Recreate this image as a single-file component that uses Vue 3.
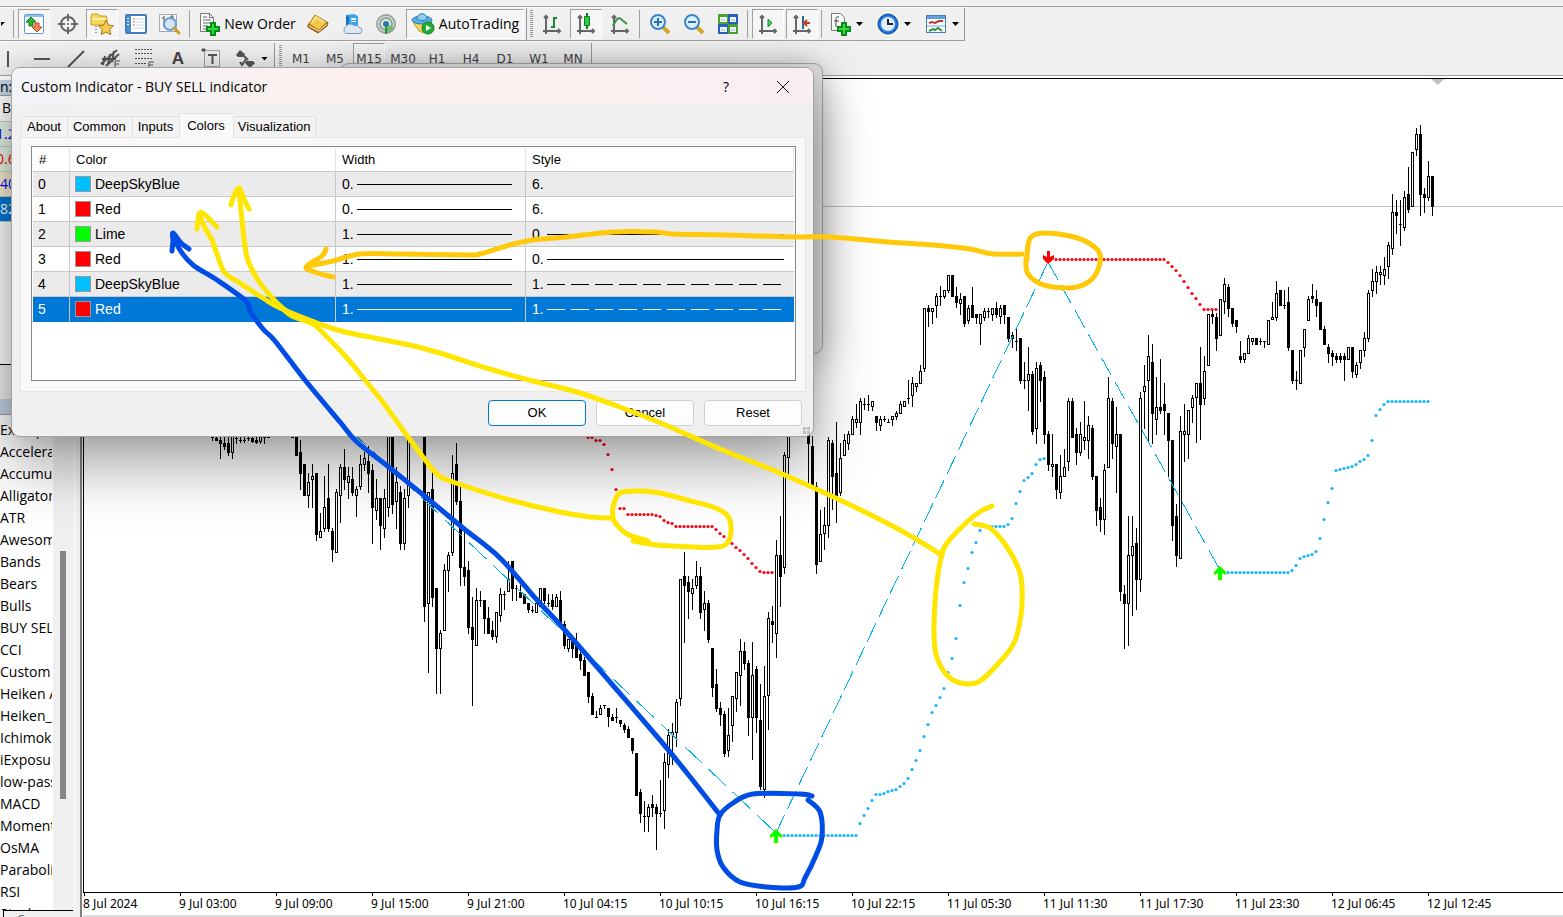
<script setup>
import { ref } from 'vue'

const F = 1
const H = 0

// Each run starts at x and advances 4px per candle: [high, bodyTop, bodyBottom, low, filled]
const runs = [
  { x: 212, bars: [
    [436,437,438,441,F],[436,438,441,441,F],[436,440,444,459,F],[436,443,447,450,F],[436,443,453,456,F],[434,434,453,459,H],
    [436,438,438,444,F],[436,440,440,443,F],[436,440,440,443,F],[436,438,438,441,F],[436,438,442,443,F],[436,440,443,444,F],
    [436,434,442,444,H],[436,437,438,444,F],[436,437,437,438,F]] },
  { x: 292, bars: [
    [436,437,437,438,F],[436,436,456,456,F],[440,452,474,490,F],[464,464,496,496,F],[473,482,496,508,H],[464,476,480,508,H],
    [473,473,535,541,F],[513,531,538,538,H],[476,507,529,532,H],[464,498,529,532,F],[528,531,550,562,F],[489,492,553,553,H],
    [464,467,496,523,H],[449,467,480,490,F],[467,476,483,499,H],[467,479,493,496,F],[486,489,496,517,H],[455,464,487,490,H],
    [452,458,465,471,H],[446,461,474,493,F],[464,470,508,544,F],[479,498,511,520,H],[498,498,526,550,F],[489,498,529,538,H],
    [436,434,508,517,H],[436,434,505,514,F],[467,482,502,529,H],[486,492,544,550,F],[489,498,544,550,H],[436,434,496,508,H]] },
  { x: 424, bars: [
    [436,434,607,622,F],[492,492,604,673,H],[472,489,598,607,F],[588,588,649,694,F],[630,633,649,694,H],[564,570,631,631,H],
    [552,555,571,592,H],[455,473,553,556,H],[443,464,502,505,F],[482,501,568,586,F],[530,567,577,586,F],[561,570,628,634,F],
    [597,627,640,706,F],[588,600,646,646,H],[591,600,600,607,F],[600,600,619,634,F],[607,618,634,634,F],[621,630,637,640,F],
    [612,612,637,643,H],[588,594,616,622,H],[591,594,594,610,F],[561,579,592,592,H],[561,561,589,601,F],[585,588,588,601,F],
    [585,592,598,598,F],[594,594,604,604,F],[603,603,610,613,F],[606,610,610,613,F],[603,603,613,613,H],[588,588,607,607,H],
    [588,588,601,604,F],[594,603,603,607,F],[594,600,607,610,F],[594,597,607,607,H],[591,600,628,628,F],[621,624,646,649,F],
    [639,639,649,652,H],[636,640,649,658,F],[633,643,658,658,F],[652,654,661,670,F],[657,660,676,676,F],[672,672,697,703,F],
    [693,696,715,715,F],[711,717,717,717,F],[705,708,715,715,H],[705,705,705,709,F],[708,708,717,727,F],[714,717,721,721,F],
    [708,717,717,723,F],[720,720,724,727,F],[723,725,730,733,F],[726,729,738,738,F],[738,738,751,754,F],[753,753,796,796,F],
    [789,792,814,823,F],[801,816,816,832,F],[804,807,817,832,H],[795,804,808,817,F],[804,807,814,850,F],[780,813,813,817,F],
    [753,762,811,829,H],[729,735,765,778,H],[723,732,735,765,H],[699,702,733,747,H],[579,579,699,706,H],[552,576,586,643,F],
    [576,582,592,619,F],[579,588,594,610,H],[561,576,586,589,H],[567,576,613,619,F],[591,603,610,631,H],[600,603,640,643,F],
    [648,648,688,697,F],[669,684,709,712,F],[702,708,715,726,F],[711,714,754,757,F],[708,735,751,757,H],[696,696,726,742,H],
    [672,672,699,712,H],[639,651,676,706,H],[642,651,664,670,F],[660,663,718,736,F],[642,675,718,760,H],[666,669,718,733,F],
    [684,720,787,790,F],[666,696,790,798,H],[612,618,696,730,H],[606,621,625,643,F],[540,555,634,658,H],[516,555,577,607,F],
    [452,455,568,574,H],[436,434,458,474,H]] },
  { x: 808, bars: [
    [436,434,444,483,F],[436,446,486,486,F],[482,486,565,574,F],[510,534,562,562,H],[507,525,534,550,H],[437,440,526,538,H],
    [440,443,477,510,F],[422,473,496,523,F],[443,458,493,496,H],[434,440,456,456,H],[431,434,444,450,H],[416,419,435,435,H],
    [404,419,423,428,H],[398,401,423,435,H],[398,404,404,410,F],[395,404,404,411,F],[401,401,407,411,H],[416,416,423,431,F],
    [416,419,426,431,H],[416,419,419,422,F],[419,422,422,422,F],[416,416,420,426,H],[411,413,417,420,H],[401,404,414,414,H],
    [401,401,407,407,H],[380,398,398,404,F],[377,383,396,407,H],[383,383,387,392,H],[365,371,384,384,H],[308,308,369,372,H],
    [305,308,312,327,F],[308,308,312,324,H],[293,296,306,318,H],[286,296,296,306,F],[290,290,297,299,H],[275,275,291,293,H],
    [275,275,297,297,F],[287,296,303,308,F],[293,299,304,315,H],[296,296,324,327,F],[305,308,321,324,H],[287,305,318,318,F],
    [314,314,318,324,F],[314,314,324,345,H],[308,311,318,321,H],[308,311,311,318,F],[308,308,315,321,H],[302,308,315,318,F],
    [305,308,317,324,H],[305,305,315,324,F],[317,317,339,342,F],[332,335,339,348,F],[328,341,341,351,F],[338,338,381,384,F],
    [362,380,380,389,F],[347,374,381,411,H],[371,374,432,435,F],[362,368,429,444,H],[362,365,381,402,F],[371,377,435,444,F],
    [431,434,465,471,F],[434,464,467,477,H],[464,464,490,499,F],[455,476,493,499,H],[449,467,477,477,H],[398,401,462,471,H],
    [398,401,438,438,F],[428,434,453,465,F],[422,434,453,456,H],[401,437,441,450,H],[416,425,441,459,H],[425,428,477,480,F],
    [476,476,511,526,F],[498,507,520,532,F],[464,470,520,535,H],[377,398,468,468,H],[398,401,444,459,F],[407,434,447,493,H],
    [434,434,592,601,F],[585,594,604,649,F],[516,555,604,646,H],[516,546,556,616,H],[528,543,580,610,F],[392,398,580,592,H],
    [365,386,392,429,H],[335,356,381,441,H],[344,362,414,444,F],[377,407,420,435,H],[359,407,411,414,F],[383,404,411,435,F],
    [413,413,441,477,F],[440,440,526,541,F],[504,516,556,567,F],[416,431,559,559,H],[404,431,435,462,H],[410,410,435,459,H],
    [395,398,408,423,H],[383,383,398,443,H],[347,383,405,440,F],[356,371,399,405,H],[314,314,366,366,H],[310,314,317,324,F],
    [313,317,339,351,F],[299,299,336,336,H],[278,284,302,314,H],[284,287,309,317,F],[308,308,324,327,F],[320,320,327,333,F],
    [341,356,360,363,F],[353,353,360,363,H],[335,338,354,354,H],[338,338,342,345,H],[338,338,345,345,F],[338,341,341,345,F],
    [341,341,341,348,F],[320,320,345,345,H],[302,317,320,320,H],[281,293,318,321,H],[290,290,306,306,F],[290,305,305,309,F],
    [287,302,348,351,F],[350,350,381,384,F],[371,380,380,390,F],[350,350,384,384,H],[329,329,348,357,H],[296,299,321,321,H],
    [284,296,299,303,F],[290,299,306,317,F],[302,302,330,330,F],[326,329,345,345,F],[344,347,354,363,F],[350,353,357,366,F],
    [353,356,360,363,F],[353,356,360,363,F],[353,356,360,381,F],[347,347,360,360,H],[347,347,372,378,F],[362,365,375,378,H],
    [350,350,363,369,H],[332,338,351,357,H],[290,293,339,342,H],[269,281,291,297,H],[266,272,282,294,H],[266,272,275,285,H],
    [257,269,276,285,H],[242,245,267,279,H],[194,212,249,255,H],[200,212,216,234,F],[200,224,224,246,F],[191,197,228,231,H],
    [167,194,210,213,F],[152,152,207,207,H],[128,134,150,156,H],[125,134,195,216,F],[188,194,198,213,F],[161,176,198,201,H],
    [176,176,207,216,F]] },
]
const candles = runs.flatMap(r => r.bars.map(([h, t, b, l, f], i) => ({ x: r.x + i * 4, h, t, b: Math.max(b, t + 1), l, f })))
const wickPath = candles.map(c => `M${c.x} ${c.h}h1V${c.l}h-1z`).join('')
const solidPath = candles.filter(c => c.f).map(c => `M${c.x - 1} ${c.t}h3V${c.b}h-3z`).join('')
const hollow = candles.filter(c => !c.f)
const hollowPath = hollow.map(c => `M${c.x - 1} ${c.t}h3V${c.b}h-3z`).join('')
const hollowCore = hollow.filter(c => c.b - c.t > 2).map(c => `M${c.x} ${c.t + 1}h1V${c.b - 1}h-1z`).join('')

const rep = (n, v) => Array(n).fill(v)
const series = (x, ys) => ys.map((y, i) => ({ x: x + i * 4, y }))
const redDots = [
  ...series(588, [437, 437, 440, 440, 444, 454, 469, 489, 508, 508, ...rep(7, 514), 515, 516, 520, 522, 523, ...rep(10, 526),
    529, 533, 536, 540, 543, 547, 550, 554, 558, 563, 567, 571, 572, 572, 572]),
  ...series(1056, [...rep(28, 259), 262, 266, 270, 275, 281, 287, 293, 298, 304, ...rep(4, 309)]),
]
const blueDots = [
  ...series(784, [...rep(19, 835), 823, 815, 808, 800, 794, 794, 793, 791, 790, 789, 786, 783, 778, 769, 760, 750, 736, 724, 712, 705,
    697, 688, 672, 658, 638, 605, 582, 568, 552, 542, 530, ...rep(6, 526), 524, 518, 503, 491, 480, 477, 473, 464, 459, 458]),
  ...series(1228, [...rep(16, 572), 570, 565, 558, 556, 555, 554, 551, 538, 519, 502, 488, 470, 469, 468, 467, 466, 464, 461, 459, 455, 440,
    415, 409, 404, ...rep(11, 401)]),
]

// Catmull-Rom smoothing for the pen strokes
function smooth(p) {
  let d = `M${p[0][0]} ${p[0][1]}`
  for (let i = 0; i < p.length - 1; i++) {
    const a = p[i - 1] || p[i], b = p[i], c = p[i + 1], e = p[i + 2] || c
    d += `C${b[0] + (c[0] - a[0]) / 6} ${b[1] + (c[1] - a[1]) / 6} ${c[0] - (e[0] - b[0]) / 6} ${c[1] - (e[1] - b[1]) / 6} ${c[0]} ${c[1]}`
  }
  return d
}
const yellow = [
  [[239,188],[242,220],[247,257],[258,280],[277,303],[290,314]],
  [[231,205],[234,196],[239,188],[244,199],[249,209]],
  [[199,214],[205,228],[212,240],[218,257],[225,273],[240,283],[263,298],[280,308],[317,323],[345,332],[400,343],[433,351],[493,370],[533,381],[577,392],[617,406],[663,424],[720,449],[780,473],[840,500],[900,530],[942,555]],
  [[197,229],[199,214],[204,214],[217,227]],
  [[280,306],[292,316],[313,324],[330,340],[347,358],[365,380],[385,405],[403,430],[423,457],[438,475],[453,482],[510,500],[560,512],[590,517],[612,518]],
  [[613,518],[613,507],[620,493],[640,491],[660,493],[687,500],[713,507],[727,515],[731,527],[728,542],[718,547],[693,547],[657,545],[633,541]],
  [[613,518],[616,524],[627,534],[648,541]],
  [[974,524],[990,528],[1007,547],[1019,570],[1022,587],[1021,615],[1014,643],[997,665],[980,681],[967,684],[950,678],[937,658],[934,633],[936,590],[941,558],[947,543],[967,522],[981,511],[992,506]],
].map(smooth)
const orange = [
  [[1022,254],[993,254],[970,249],[933,245],[887,242],[830,237],[793,237],[727,235],[673,234],[655,232],[613,232],[567,237],[533,240],[510,245],[480,254],[467,255],[400,254],[360,254],[333,261],[309,266]],
  [[326,249],[322,256],[306,267],[318,273],[333,277]],
  [[1027,260],[1028,245],[1032,236],[1045,233],[1070,236],[1087,242],[1099,252],[1100,263],[1093,278],[1077,287],[1053,287],[1037,282],[1027,272],[1026,258]],
].map(smooth)
const blue = [
  [[174,236],[180,250],[193,265],[217,280],[246,301],[250,311],[263,329],[275,341],[305,380],[340,422],[357,442],[390,468],[427,498],[463,528],[500,558],[537,600],[563,628],[610,682],[660,740],[687,773],[720,815]],
  [[172,251],[173,241],[173,233],[181,243],[189,249]],
  [[812,796],[800,794],[753,794],[733,803],[720,815],[717,830],[717,850],[723,867],[740,882],[767,887],[798,887],[805,878],[817,853],[822,837],[820,812],[808,800]],
].map(smooth)

const times = ['8 Jul 2024', '9 Jul 03:00', '9 Jul 09:00', '9 Jul 15:00', '9 Jul 21:00', '10 Jul 04:15', '10 Jul 10:15', '10 Jul 16:15',
  '10 Jul 22:15', '11 Jul 05:30', '11 Jul 11:30', '11 Jul 17:30', '11 Jul 23:30', '12 Jul 06:45', '12 Jul 12:45']
const indicators = ['Examples', 'Accelerator', 'Accumulation', 'Alligator', 'ATR', 'Awesome', 'Bands', 'Bears', 'Bulls', 'BUY SELL', 'CCI',
  'Custom', 'Heiken Ashi', 'Heiken_Ashi', 'Ichimoku', 'iExposure', 'low-pass', 'MACD', 'Momentum', 'OsMA', 'Parabolic', 'RSI', 'Stochastic']
const frames = ['M1', 'M5', 'M15', 'M30', 'H1', 'H4', 'D1', 'W1', 'MN']
const frame = ref('M15')
const tabs = ['About', 'Common', 'Inputs', 'Colors', 'Visualization']
const tab = ref('Colors')
const rows = [
  { name: 'DeepSkyBlue', cls: 'sky', width: 0, style: 6, line: '' },
  { name: 'Red', cls: 'red', width: 0, style: 6, line: '' },
  { name: 'Lime', cls: 'lime', width: 1, style: 0, line: 'solid' },
  { name: 'Red', cls: 'red', width: 1, style: 0, line: 'solid' },
  { name: 'DeepSkyBlue', cls: 'sky', width: 1, style: 1, line: 'dash' },
  { name: 'Red', cls: 'red', width: 1, style: 1, line: 'dash' },
]
const selected = ref(5)
</script>

<template>
  <div class="app">
    <div class="menu-strip"></div>
    <div class="toolbar main-bar">
      <button class="tb drop" aria-label="Profiles"><i class="caret"></i></button>
      <i class="sep"></i>
      <button class="tb on" aria-label="Market Watch">
        <svg width="22" height="22"><rect x="1.500" y="1.500" width="19" height="19" rx="1" fill="#fff" stroke="#5b9bd9" /><path d="M2 2h18v2H2z" fill="#8fc0ee" /><path d="M8 4l5 5h-3v4H6V9H3z" fill="#2fb535" stroke="#187a1c" /><path d="M14 19l5-5h-3v-4h-4v4H9z" fill="#f58a60" stroke="#c4441c" /></svg>
      </button>
      <button class="tb" aria-label="Data Window">
        <svg width="22" height="22" fill="none" stroke="#666" stroke-width="2"><circle cx="11" cy="11" r="7" /><path d="M11 1v7M11 14v7M1 11h7M14 11h7" /><path d="M11 10v2M10 11h2" stroke-width="1" /></svg>
      </button>
      <button class="tb on" aria-label="Navigator">
        <svg width="24" height="22"><path d="M1 3l1-2h6l2 2h6l1 2v7H1z" fill="#f5d75c" stroke="#c69a22" /><path d="M2 5h14v2H2z" fill="#fff3b0" /><path d="M6 13v9" stroke="#333" stroke-dasharray="1 2" /><path d="M16 7l2.500 5 5 .8-3.700 3.600 1 5.200-4.800-2.500-4.700 2.500.9-5.200-3.700-3.600 5.200-.8z" fill="#f3c94f" stroke="#a87718" /></svg>
      </button>
      <button class="tb" aria-label="Terminal">
        <svg width="22" height="20"><rect x="1" y="1" width="20" height="18" rx="1" fill="#fff" stroke="#3f7fc1" stroke-width="2" /><path d="M2 2h4v16H2z" fill="#4a8ed4" /><path d="M3 4v1M3 7v1M3 10v1" stroke="#fff" stroke-width="2" /><path d="M8 5h2M8 8h2M8 11h2" stroke="#e25a4a" /><path d="M11 5h8M11 8h8M11 11h8M8 14h11" stroke="#c9d7ea" /></svg>
      </button>
      <button class="tb" aria-label="Strategy Tester">
        <svg width="24" height="24"><path d="M1.500 2.500h17v17h-17z" fill="#f5f5f5" stroke="#aaa" /><path d="M6 4v11M4 6h2M6 9h2M14 3v6M12 5h4" stroke="#555" fill="none" /><circle cx="12" cy="12" r="6" fill="#cfe6fa" fill-opacity=".9" stroke="#6a9fd0" stroke-width="2" /><path d="M16 16l5 5" stroke="#d39a22" stroke-width="3" stroke-linecap="round" /></svg>
      </button>
      <i class="sep"></i>
      <button class="tb text new-order">
        <svg width="22" height="24"><path d="M2.500 1.500h9l4 4v14h-13z" fill="#fafafa" stroke="#777" /><path d="M11.500 1.500v4h4" fill="none" stroke="#777" /><path d="M5 5h4M5 8h8M5 11h8M5 14h5M5 17h4" stroke="#666" /><path d="M13 11h4v4h4v4h-4v4h-4v-4H9v-4h4z" fill="#2fe03b" stroke="#0a8a1c" stroke-width="2" /></svg>
        <span>New Order</span>
      </button>
      <button class="tb" aria-label="MetaEditor">
        <svg width="22" height="22"><path d="M1 12L8 3l13 7-1 3-9 7L1 14z" fill="#b87416" stroke="#85540e" /><path d="M2 11L8 2l12 7-8 8z" fill="#f3c748" stroke="#b47c1a" /><path d="M5 10l4-6 8 5" fill="none" stroke="#fbe28c" stroke-width="2" /><path d="M2 13l10 5 8-7" stroke="#fff4cf" fill="none" /></svg>
      </button>
      <button class="tb" aria-label="Virtual Hosting">
        <svg width="22" height="22"><path d="M5 2l8-1 4 2v10H5z" fill="#3aa3ec" /><path d="M5 2l3 2v9H5z" fill="#1877c4" /><path d="M10 5h5v2h-5zM10 8h5v1h-5z" fill="#e9f6ff" /><path d="M5 20.500a4 4 0 0 1 0-7 5 5 0 0 1 8-1 4 4 0 0 1 5 2 3 3 0 0 1 0 6z" fill="#dfe8f5" stroke="#7f98bd" /></svg>
      </button>
      <button class="tb" aria-label="Signals">
        <svg width="22" height="22" fill="none"><circle cx="11" cy="11" r="9" fill="#e2e8e4" stroke="#9aa3a0" stroke-width="2" /><circle cx="11" cy="11" r="6" stroke="#8ba794" stroke-width="2" /><path d="M11 11v9a9 9 0 0 0 8-6z" fill="#55b75c" fill-opacity=".7" /><circle cx="11" cy="11" r="3" fill="#2d72b8" /><path d="M11 12v9" stroke="#24953a" stroke-width="2" /></svg>
      </button>
      <button class="tb text auto on">
        <svg width="24" height="24"><path d="M2 10h19l-8 11-5-2z" fill="#f6d75e" stroke="#c79b25" /><ellipse cx="11" cy="8" rx="10" ry="4" fill="#58aee2" stroke="#2b7cb5" /><path d="M6 7c0-7 10-7 10 0-2 2-8 2-10 0z" fill="#8fd0f2" stroke="#2b7cb5" /><circle cx="17" cy="16" r="6" fill="#22ae34" stroke="#0f7f20" /><path d="M15 13l5 3-5 3z" fill="#fff" /></svg>
        <span>AutoTrading</span>
      </button>
      <i class="edge"></i><i class="grip"></i>
      <button class="tb" aria-label="Bar Chart">
        <svg width="22" height="22" fill="none" stroke="#666" stroke-width="2"><path d="M5 3v18M2 18h17M3 5l2-2 2 2M17 16l2 2-2 2" /><path d="M13 4v11M13 5h3M10 14h3" stroke="#1a8a2c" /></svg>
      </button>
      <button class="tb on" aria-label="Candlesticks">
        <svg width="22" height="22" fill="none" stroke="#666" stroke-width="2"><path d="M5 3v18M2 18h17M3 5l2-2 2 2M17 16l2 2-2 2" /><path d="M12 0v16" stroke="#147a22" /><path d="M9.500 3.500h5v9h-5z" fill="#2bd23b" stroke="#147a22" stroke-width="1" /></svg>
      </button>
      <button class="tb" aria-label="Line Chart">
        <svg width="22" height="22" fill="none" stroke="#666" stroke-width="2"><path d="M5 3v18M2 18h17M3 5l2-2 2 2M17 16l2 2-2 2" /><path d="M4 13c4-9 7-9 9-6l5 4" stroke="#3c9147" /></svg>
      </button>
      <i class="sep"></i>
      <button class="tb" aria-label="Zoom In">
        <svg width="22" height="22"><path d="M14 14l6 6" stroke="#d6a72c" stroke-width="4" /><circle cx="9" cy="9" r="7" fill="#d8f0ff" stroke="#3c86c8" stroke-width="2" /><path d="M9 5v8M5 9h8" stroke="#2b6fae" stroke-width="2" /></svg>
      </button>
      <button class="tb" aria-label="Zoom Out">
        <svg width="22" height="22"><path d="M14 14l6 6" stroke="#d6a72c" stroke-width="4" /><circle cx="9" cy="9" r="7" fill="#d8f0ff" stroke="#3c86c8" stroke-width="2" /><path d="M5 9h8" stroke="#2b6fae" stroke-width="2" /></svg>
      </button>
      <button class="tb" aria-label="Tile Windows">
        <svg width="22" height="22"><path d="M1 1h10v10H1zM11 11h10v10H11z" fill="#4ca32a" /><path d="M11 1h10v10H11zM1 11h10v10H1z" fill="#2a5fc0" /><path d="M3 4h7v5H3zM13 4h6v5h-6zM3 14h7v5H3zM13 14h6v5h-6z" fill="#eef6ff" /><path d="M4 7h4M14 7h4M4 17h4M14 17h4" stroke="#9bb" /></svg>
      </button>
      <i class="sep"></i>
      <button class="tb on" aria-label="Auto Scroll">
        <svg width="22" height="22" fill="none" stroke="#666" stroke-width="2"><path d="M5 3v18M2 18h17M3 5l2-2 2 2M17 16l2 2-2 2" /><path d="M11 6l4 4-4 4z" fill="#3ddc4a" stroke="#14902a" stroke-width="1" /></svg>
      </button>
      <button class="tb on" aria-label="Chart Shift">
        <svg width="22" height="22" fill="none" stroke="#666" stroke-width="2"><path d="M5 3v18M2 18h17M3 5l2-2 2 2M17 16l2 2-2 2" /><path d="M12 3v13" stroke="#31688e" /><path d="M13 10h6M16 7l-3 3 3 3" stroke="#c0401c" /></svg>
      </button>
      <i class="sep"></i>
      <button class="tb menu" aria-label="Indicators">
        <svg width="22" height="24"><path d="M2.500 1.500h9l4 4v13h-13z" fill="#fafafa" stroke="#777" /><path d="M10 5c-3-1-3 1-3 4v6M5 9h5" stroke="#444" fill="none" /><path d="M13 11h4v4h4v4h-4v4h-4v-4H9v-4h4z" fill="#2fe03b" stroke="#0a8a1c" stroke-width="2" /></svg>
        <i class="caret"></i>
      </button>
      <i class="sep thin"></i>
      <button class="tb menu" aria-label="Periods">
        <svg width="22" height="22"><circle cx="11" cy="11" r="10" fill="#1d6fd0" stroke="#1552a0" /><circle cx="11" cy="11" r="7" fill="#e6f0fa" stroke="#8ec0f0" /><path d="M11 6v5h5" stroke="#222" fill="none" stroke-width="2" /></svg>
        <i class="caret"></i>
      </button>
      <i class="sep thin"></i>
      <button class="tb menu" aria-label="Templates">
        <svg width="22" height="20"><rect x="1.500" y="1.500" width="19" height="17" fill="#fff" stroke="#3f7fc1" /><path d="M2 2h18v3H2z" fill="#5e9fe0" /><path d="M2 12h18" stroke="#7fa8d8" /><path d="M4 9l3-1 3 1 4-2 4 0" stroke="#b23a2a" fill="none" stroke-width="2" /><path d="M4 17l4-2 2 1 3-2 4 3" stroke="#2f9440" fill="none" stroke-width="2" /></svg>
        <i class="caret"></i>
      </button>
      <i class="edge"></i>
    </div>

    <div class="toolbar draw-bar">
      <button class="tb" aria-label="Vertical Line"><svg width="22" height="22" stroke="#555"><path d="M11 3v16" stroke-width="2" /></svg></button>
      <button class="tb" aria-label="Horizontal Line"><svg width="22" height="22" stroke="#555"><path d="M3 11h16" stroke-width="2" /></svg></button>
      <button class="tb" aria-label="Trendline"><svg width="22" height="22" stroke="#555"><path d="M3 19L19 3" stroke-width="2" /></svg></button>
      <button class="tb" aria-label="Channel"><svg width="22" height="22" stroke="#555" fill="none" stroke-width="2"><path d="M2 16L18 2M7 18L20 6M6 8l-2 9M11 6l-2 10M15 3l-2 11M3 11h14" /><path d="M16 20v-7h5M16 16h4" stroke-width="1" /></svg></button>
      <button class="tb" aria-label="Fibonacci"><svg width="22" height="22" stroke="#555" fill="none"><path d="M2 1.500h18M2 5.500h18M2 10.500h18M2 15.500h12" stroke-dasharray="2 1" /><path d="M16 20v-6h5M16 17h4" /></svg></button>
      <button class="tb letter">A</button>
      <button class="tb" aria-label="Text Label"><svg width="22" height="22" stroke="#555" fill="none"><path d="M3.500 2.500h15v16h-15z" stroke-dasharray="1 1" /><path d="M7 7h9M11.500 7v9" stroke-width="2" /><path d="M1 1h3v2H1z" fill="#555" /></svg></button>
      <button class="tb menu" aria-label="Arrows"><svg width="22" height="22" fill="#555"><path d="M2 7l4-5 5 4-2 3H4zM12 13h7l2 2-5 5-5-5z" /><path d="M9 7l5 5M6 14l2 3 4-6" fill="none" stroke="#555" stroke-width="2" /></svg><i class="caret"></i></button>
      <i class="edge"></i><i class="grip"></i>
      <button v-for="f in frames" :key="f" class="tb frame" :class="{ on: f === frame }" @click="frame = f">{{ f }}</button>
      <i class="edge"></i>
    </div>

    <div class="workspace">
      <aside class="side">
        <section class="watch">
          <div class="cap">n:</div>
          <table>
            <thead><tr><th>B</th></tr></thead>
            <tbody>
              <tr class="up"><td>1.2</td></tr>
              <tr class="down"><td>0.6</td></tr>
              <tr class="gold"><td>40</td></tr>
              <tr class="sel"><td>82</td></tr>
            </tbody>
          </table>
        </section>
        <section class="nav">
          <div class="cap"></div>
          <div class="nav-body">
            <ul><li v-for="n in indicators" :key="n">{{ n }}</li></ul>
            <div class="track"><i></i></div>
          </div>
          <div class="nav-tabs"><button>Common</button></div>
        </section>
      </aside>

      <main class="chart">
        <div class="plot">
          <svg class="canvas" width="100%" height="100%">
            <path d="M1347 0h13l-6 6z" fill="#c0c0c0" />
            <rect x="0" y="127" width="100%" height="1" fill="#c0c0c0" />
            <g transform="translate(-84 -79)">
              <g shape-rendering="crispEdges">
                <path :d="wickPath" /><path :d="solidPath" /><path :d="hollowPath" />
                <path :d="hollowCore" fill="#fff" />
              </g>
              <g fill="none" stroke="#00b4f0" shape-rendering="crispEdges">
                <path d="M349 429L776 833" stroke-dasharray="24 9" />
                <path d="M776 833L1048 262" stroke-dasharray="20 7 20 6" />
                <path d="M1048 262L1220 570" stroke-dasharray="20 7 20 8" />
              </g>
              <g fill="#ff0010"><circle v-for="d in redDots" :key="d.x" :cx="d.x" :cy="d.y + 0.5" r="1.600" /></g>
              <g fill="#14b4ff"><circle v-for="d in blueDots" :key="d.x" :cx="d.x" :cy="d.y + 0.5" r="1.600" /></g>
              <g fill="#0f0" stroke="#b4f000" stroke-width=".5">
                <path d="M776 829l6 6v3l-4-2v7h-4v-7l-4 2v-3z" />
                <path d="M1220 566l6 6v3l-4-2v7h-4v-7l-4 2v-3z" />
              </g>
              <path d="M1048 264l-5-5v-4l4 2v-6h3v6l4-2v4z" fill="red" />
            </g>
          </svg>
        </div>
        <ol class="axis"><li v-for="t in times" :key="t">{{ t }}</li></ol>
      </main>
    </div>

    <div class="window back-window"></div>

    <section class="window dialog" role="dialog" aria-label="Custom Indicator">
      <header class="title">
        <h1>Custom Indicator - BUY SELL indicator</h1>
        <button aria-label="Help">?</button>
        <button aria-label="Close"><svg width="14" height="14"><path d="M1 1l12 12M13 1L1 13" stroke="#111" /></svg></button>
      </header>
      <div class="content">
        <nav class="tabs">
          <button v-for="t in tabs" :key="t" :class="{ active: t === tab }" @click="tab = t">{{ t }}</button>
        </nav>
        <div class="panel">
          <div class="listbox">
            <table class="grid">
              <colgroup><col class="c1"><col class="c2"><col class="c3"><col></colgroup>
              <thead><tr><th>#</th><th>Color</th><th>Width</th><th>Style</th></tr></thead>
              <tbody>
                <tr v-for="(r, i) in rows" :key="i" :class="{ chosen: i === selected }" @click="selected = i">
                  <td>{{ i }}</td>
                  <td><div class="cell"><i class="swatch" :class="r.cls"></i>{{ r.name }}</div></td>
                  <td><div class="cell w"><b>{{ r.width }}.</b><i class="rule solid"></i></div></td>
                  <td><div class="cell s"><b>{{ r.style }}.</b><i class="rule" :class="r.line"></i></div></td>
                </tr>
              </tbody>
            </table>
          </div>
        </div>
        <footer class="actions">
          <button class="primary">OK</button><button>Cancel</button><button>Reset</button>
        </footer>
      </div>
      <svg class="size-grip" width="8" height="8" fill="#bbb"><path d="M0 0h3v3H0zM4 0h3v3H4zM0 4h3v3H0zM4 4h3v3H4z" /></svg>
    </section>

    <svg class="ink" width="100%" height="100%" fill="none" stroke-width="5" stroke-linecap="round" stroke-linejoin="round">
      <g stroke="#ffe600"><path v-for="d in yellow" :key="d" :d="d" /></g>
      <g stroke="#ffc90a"><path v-for="d in orange" :key="d" :d="d" /></g>
      <g stroke="#004de6"><path v-for="d in blue" :key="d" :d="d" /></g>
    </svg>
  </div>
</template>

<style>
body { margin: 0; background: #f0f0f0; }
</style>

<style scoped>
* { box-sizing: border-box; }
button { font: inherit; color: inherit; margin: 0; padding: 0; border: 0; background: none; }
.app { position: relative; height: 100vh; overflow: hidden; display: flex; flex-direction: column; background: #f0f0f0; color: #000; font: 14px/20px "Open Sans", "Noto Sans", sans-serif; }
.menu-strip { flex: none; height: 7px; border-bottom: 1px solid #a0a0a0; }
.toolbar { flex: none; display: flex; align-items: center; gap: 2px; }
.main-bar { height: 34px; align-self: flex-start; border-top: 1px solid #fff; border-bottom: 1px solid #a0a0a0; }
.draw-bar { height: 34px; margin-left: -8px; align-self: flex-start; border-top: 1px solid #fff; color: #444; }
.tb { flex: none; width: 32px; height: 30px; display: flex; align-items: center; justify-content: center; border: 1px solid transparent; }
.tb svg { flex: none; }
.tb.on { border-color: #a0a0a0 #fff #fff #a0a0a0; background: #f6f6f6; }
.tb.drop { width: 10px; justify-content: flex-start; }
.tb.text { gap: 4px; font-size: 14px; white-space: nowrap; }
.new-order { width: 106px; }
.tb.auto { width: 118px; margin-left: 2px; }
.tb.menu { width: 40px; gap: 5px; }
.draw-bar .tb.menu { width: 42px; }
.tb.letter { font: bold 17px/20px "Liberation Sans", sans-serif; }
.tb.frame { font: 12px/16px "DejaVu Sans", sans-serif; }
.draw-bar .tb { height: 32px; }
.caret { flex: none; width: 7px; height: 4px; background: #000; clip-path: polygon(0 0, 100% 0, 50% 100%); }
.drop .caret { width: 4px; clip-path: polygon(0 0, 100% 0, 0 100%); }
.sep { flex: none; width: 1px; height: 28px; margin: 0 2px 0 1px; background: #a0a0a0; }
.sep.thin { background: none; }
.edge { flex: none; width: 1px; height: 32px; background: #999; }
.grip { flex: none; width: 3px; height: 28px; margin: 0 1px; background: repeating-linear-gradient(#999 0 1px, transparent 1px 2px); }
.draw-bar .grip { margin-left: 2px; }

.workspace { flex: 1; min-height: 0; display: flex; }
.side { flex: none; width: 80px; display: flex; flex-direction: column; overflow: hidden; border-top: 1px solid #a0a0a0; }
.watch { height: 289px; border-bottom: 1px solid #000; background: #fff; font-size: 14px; }
.cap { height: 16px; margin-top: 4px; background: #c3d3e6; border-bottom: 1px solid #a0a0a0; line-height: 14px; }
.watch table { width: 100%; border-collapse: collapse; }
.watch th, .watch td { height: 25px; padding: 0; border-bottom: 1px solid #ccc; text-align: left; font-weight: 400; }
.watch th { padding-left: 2px; }
.up td, .down td { text-indent: -4px; }
.up { background: #e5f5e5; color: #00f; }
.down { background: #e5f5e5; color: red; }
.gold { background: #f8f0cc; color: #00f; }
.sel { background: #0078d7; color: #fff; }
.nav { flex: 1; min-height: 0; display: flex; flex-direction: column; margin-top: 30px; }
.nav-body { flex: 1; min-height: 0; display: flex; overflow: hidden; }
.nav ul { flex: none; width: 53px; margin: 0; padding: 4px 1px 0 0; list-style: none; background: #fff; overflow: hidden; }
.nav li { height: 22px; line-height: 22px; white-space: nowrap; overflow: hidden; }
.track { width: 22px; border-right: 1px solid #fff; padding: 136px 8px 0 7px; }
.track i { display: block; width: 6px; height: 248px; background: #868686; }
.nav-tabs { flex: none; height: 7px; margin: 0 7px 0 3px; border-top: 1px solid #000; border-left: 1px solid #000; overflow: hidden; color: #666; font-size: 12px; }
.nav-tabs button { display: block; margin-left: 13px; line-height: 18px; }

.chart { flex: 1; min-width: 0; display: flex; flex-direction: column; border-left: 2px solid #808080; border-top: 1px solid #a0a0a0; background: #fff; padding: 2px 0 0 1px; }
.plot { flex: 1; min-height: 0; position: relative; border-top: 1px solid #000; border-left: 1px solid #000; border-bottom: 1px solid #000; }
.canvas { position: absolute; inset: 0; overflow: hidden; }
.axis { flex: none; display: flex; height: 24px; margin: 0; padding: 0; list-style: none; overflow: hidden; border-bottom: 2px solid #ddd; }
.axis li { position: relative; flex: none; width: 96px; font: 12px/22px "Noto Sans", sans-serif; white-space: nowrap; }
.axis li::before { content: ""; position: absolute; left: 1px; top: 0; width: 1px; height: 3px; background: #000; }

.window { position: absolute; border-radius: 9px; border: 1px solid #a2a2a2; }
.back-window { left: 340px; top: 63px; width: 483px; height: 291px; background: #dedede; box-shadow: 0 8px 40px rgba(0, 0, 0, .28); }
.dialog { left: 11px; top: 67px; width: 803px; background: #f0f0f0; box-shadow: 0 30px 60px rgba(0, 0, 0, .34), 0 0 24px rgba(0, 0, 0, .14); font: 13px/16px "Liberation Sans", Arial, sans-serif; }
.title { display: flex; align-items: center; height: 37px; padding: 0 22px 0 9px; border-radius: 8px 8px 0 0; background: linear-gradient(90deg, #f2f4f8, #fbf0ee 40%, #f9eff1); font: 14px/20px "Open Sans", sans-serif; }
.title h1 { flex: 1; margin: 0; font: inherit; }
.title button { display: flex; align-items: center; justify-content: center; width: 16px; height: 24px; margin-left: 41px; }
.content { padding: 8px 7px 10px 8px; }
.tabs { display: flex; align-items: flex-end; height: 24px; padding-left: 1px; }
.tabs button { height: 21px; padding: 0 6px 0 5px; border: 1px solid #e2e2e2; border-right-width: 0; border-bottom: 0; background: #f3f3f3; }
.tabs button:last-child { padding: 0 4px; border-right-width: 1px; }
.tabs button.active { height: 25px; margin-bottom: -1px; padding: 0 8px 0 7px; background: #f9f9f9; position: relative; z-index: 1; }
.panel { padding: 8px 9px 10px 10px; border: 1px solid #e5e5e5; background: #f9f9f9; }
.listbox { height: 235px; padding: 1px; border: 1px solid #828790; background: #fff; }
.grid { width: 100%; border-collapse: separate; border-spacing: 0; table-layout: fixed; font-size: 14px; }
.c1 { width: 37px; } .c2 { width: 266px; } .c3 { width: 190px; }
.grid th { height: 24px; padding: 0 0 0 6px; text-align: left; font-size: 13px; font-weight: 400; border-right: 1px solid #e5e5e5; border-bottom: 1px solid #c8c8c8; }
.grid td { height: 25px; padding: 0 0 0 5px; border-right: 1px solid #c8c8c8; border-bottom: 1px solid #c8c8c8; }
.grid td:last-child { border-right: 0; }
.grid tbody tr:nth-child(odd) { background: #ebebeb; }
.grid tbody tr.chosen { background: #0078d7; color: #fff; }
.chosen td { border-bottom-color: #0078d7; }
.cell { display: flex; align-items: center; }
.cell b { width: 15px; font-weight: 400; }
.cell.w { padding: 0 13px 0 1px; }
.cell.s { padding: 0 10px 0 1px; }
.swatch { width: 16px; height: 16px; margin-right: 4px; border: 1px solid #999; }
.sky { background: #00bfff; } .red { background: red; } .lime { background: #0f0; }
.rule { flex: 1; height: 1px; }
.rule.solid { background: currentColor; }
.rule.dash { background: repeating-linear-gradient(90deg, currentColor 0 18px, transparent 18px 24px); }
.actions { display: flex; justify-content: flex-end; gap: 10px; margin: 8px 4px 0 0; }
.actions button { width: 98px; height: 26px; border: 1px solid #d0d0d0; border-radius: 4px; background: #fdfdfd; }
.actions .primary { border-color: #0078d4; }
.size-grip { position: absolute; right: 2px; bottom: 1px; }
.ink { position: absolute; inset: 0; pointer-events: none; }
</style>
